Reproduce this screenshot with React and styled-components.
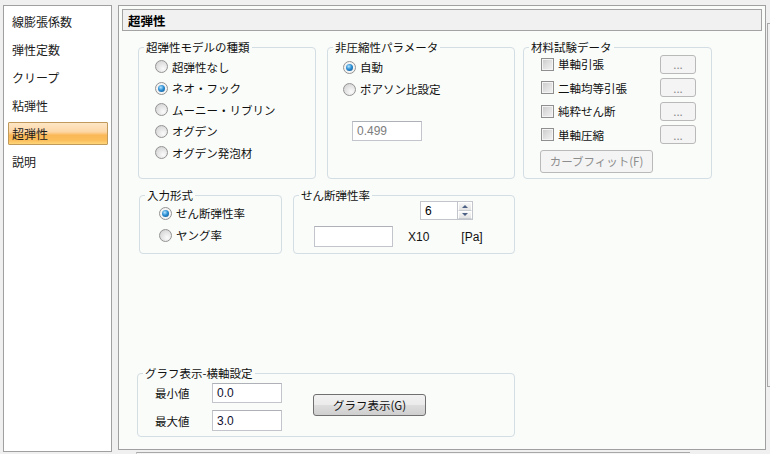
import React from 'react';
import styled, { createGlobalStyle, css } from 'styled-components';

const GlobalStyle = createGlobalStyle`
  html, body {
    margin: 0;
    padding: 0;
    background: #f0f0f0;
  }
  body {
    font-family: "Liberation Sans", "Noto Sans CJK JP", sans-serif;
    font-size: 12px;
    color: #000;
  }
`;

const Window = styled.div`
  width: 770px;
  height: 454px;
  box-sizing: border-box;
  display: flex;
  align-items: flex-start;
  gap: 6px;
  padding: 5px 0 0 3px;
  overflow: hidden;
`;

const Sidebar = styled.div`
  width: 109px;
  height: 447px;
  box-sizing: border-box;
  background: #fff;
  border: 1px solid #a0a0a0;
  padding: 4px 3px 0 4px;
  display: flex;
  flex-direction: column;
  gap: 5px;
  flex: none;
`;

const NavItem = styled.div`
  height: 23px;
  box-sizing: border-box;
  border: 1px solid transparent;
  border-radius: 1px;
  padding: 0 3px;
  display: flex;
  align-items: center;
  font-family: "Noto Sans CJK JP", sans-serif;
  font-size: 12px;
  line-height: 14px;
  color: #1a1a1a;
  ${p => p.$active && css`
    border-color: #c09a5a;
    background: linear-gradient(#fee6c6 0%, #fdd7a6 42%, #fbb857 58%, #fbbd5b 82%, #fdd67a 100%);
  `}
`;

const MainColumn = styled.div`
  display: flex;
  flex-direction: column;
  flex: none;
`;

const MainPanel = styled.div`
  width: 648px;
  height: 445px;
  box-sizing: border-box;
  background: #fafcf9;
  border: 1px solid #a0a0a0;
  padding: 3px;
  display: flex;
  flex-direction: column;
  flex: none;
`;

const BottomStrip = styled.div`
  margin: 2px 0 0 18px;
  width: 553px;
  height: 4px;
  border-top: 1px solid #a8a8a8;
  border-left: 1px solid #c8c8c8;
  background: #f4f4f4;
`;

const RightEdge = styled.div`
  margin: 18px 0 0 -5px;
  width: 3px;
  height: 364px;
  box-sizing: border-box;
  border: 1px solid #a8a8a8;
  border-right: none;
  flex: none;
`;

const Header = styled.div`
  height: 22px;
  box-sizing: border-box;
  background: #f1f1f1;
  border: 1px solid #a3a3a3;
  padding: 0 5px;
  display: flex;
  align-items: center;
  font-family: "Noto Sans CJK JP", sans-serif;
  font-weight: 700;
  font-size: 12.5px;
  flex: none;
`;

const Body = styled.div`
  flex: 1;
  display: flex;
  flex-direction: column;
  padding: 9px 0 9px 16px;
`;

const Row = styled.div`
  display: flex;
  align-items: stretch;
  height: ${p => p.$h}px;
  margin-top: ${p => p.$mt || 0}px;
  margin-left: ${p => p.$ml || 0}px;
  ${p => p.$bottom && css`margin-top: auto;`}
`;

const Group = styled.fieldset`
  margin: 0 0 0 ${p => p.$gap || 0}px;
  min-width: 0;
  width: ${p => p.$w}px;
  box-sizing: border-box;
  border: 1px solid #d3dde4;
  border-radius: 4px;
  padding: 0;
`;

const Legend = styled.legend`
  margin-left: 5px;
  padding: 0 2px;
  font-family: "Noto Sans CJK JP", sans-serif;
  font-size: 11.5px;
  line-height: 14px;
  color: #111;
`;

const GroupBody = styled.div`
  display: flex;
  flex-direction: column;
  align-items: flex-start;
  padding: ${p => p.$pad || '0 0 0 16px'};
`;

const OptionRow = styled.label`
  display: flex;
  align-items: center;
  gap: 4px;
  height: ${p => p.$h || 21.5}px;
  font-family: "Noto Sans CJK JP", sans-serif;
  font-size: 11.5px;
  line-height: 14px;
  color: #111;
`;

const RadioDot = styled.span`
  position: relative;
  width: 13px;
  height: 13px;
  box-sizing: border-box;
  border-radius: 50%;
  border: 1px solid #939393;
  background: radial-gradient(circle at 65% 70%, #fbfbfb 0%, #e6e6e6 45%, #cdcdcd 100%);
  flex: none;
  ${p => p.$checked && css`
    background: #f4f4f4;
    &::after {
      content: '';
      position: absolute;
      left: 2px;
      top: 2px;
      width: 7px;
      height: 7px;
      border-radius: 50%;
      background: radial-gradient(circle at 40% 35%, #b8e6ff 0%, #2c8fd4 45%, #0d4d86 100%);
    }
  `}
`;

const CheckBox = styled.span`
  width: 13px;
  height: 13px;
  box-sizing: border-box;
  border: 1px solid #8f8f8f;
  box-shadow: inset 0 0 0 1px #f4f4f4;
  background: linear-gradient(135deg, #c9c9c9 0%, #e0e0e0 50%, #f3f3f3 100%);
  flex: none;
`;

const TextBox = styled.div`
  width: ${p => p.$w || 70}px;
  height: ${p => p.$h || 20}px;
  box-sizing: border-box;
  border: 1px solid #c2c6cc;
  border-top-color: #aeb2b8;
  background: #fff;
  padding: 0 4px;
  display: flex;
  align-items: center;
  font-size: 12px;
  color: ${p => (p.$disabled ? '#7d7d7d' : '#101030')};
  flex: none;
`;

const Button = styled.div`
  width: ${p => p.$w}px;
  height: ${p => p.$h}px;
  box-sizing: border-box;
  border-radius: 3px;
  display: flex;
  align-items: center;
  justify-content: center;
  font-family: "Noto Sans CJK JP", sans-serif;
  font-size: 11.5px;
  line-height: 14px;
  flex: none;
  ${p => p.$disabled ? css`
    border: 1px solid #b9b9b9;
    background: #f4f4f4;
    color: #8d8d8d;
  ` : css`
    border: 1px solid #707070;
    background: linear-gradient(#f2f2f2 0%, #ebebeb 48%, #dddddd 52%, #cfcfcf 100%);
    color: #111;
  `}
`;

const CheckList = styled.div`
  align-self: stretch;
  display: flex;
  flex-direction: column;
  gap: 3.5px;
`;

const CheckRow = styled.div`
  display: flex;
  align-items: center;
  justify-content: space-between;
  height: 20px;
  padding-right: 15px;
`;

const Spinner = styled.div`
  display: flex;
  margin: -1px 0 0 126px;
  height: 19px;
`;

const SpinField = styled.div`
  width: 37px;
  box-sizing: border-box;
  border: 1px solid #c2c6cc;
  border-right: none;
  background: #fff;
  padding-left: 4px;
  display: flex;
  align-items: center;
  font-size: 12px;
`;

const SpinButtons = styled.div`
  width: 16px;
  display: flex;
  flex-direction: column;
  border: 1px solid #c2c6cc;
  box-sizing: border-box;
`;

const SpinButton = styled.div`
  flex: 1;
  display: flex;
  align-items: center;
  justify-content: center;
  background: linear-gradient(#f7f7f7, #e3e3e3);
  border: 1px solid #fff;
  border-bottom-color: #c9cdd2;
  box-sizing: border-box;
  &::before {
    content: '';
    border-left: 3px solid transparent;
    border-right: 3px solid transparent;
    ${p => p.$down
      ? css`border-top: 3px solid #4d6185;`
      : css`border-bottom: 3px solid #4d6185;`}
  }
`;

const ValueRow = styled.div`
  display: flex;
  align-items: center;
  margin: 6px 0 0 20px;
  font-size: 12px;
`;

const Unit = styled.span`
  margin-left: ${p => p.$ml}px;
  color: #111;
`;

const AxisContent = styled.div`
  display: flex;
  align-items: flex-start;
`;

const AxisGrid = styled.div`
  display: grid;
  grid-template-columns: 57px 70px;
  row-gap: 7px;
  align-items: center;
  padding-top: 3px;
`;

const AxisLabel = styled.span`
  font-family: "Noto Sans CJK JP", sans-serif;
  font-size: 11.5px;
  color: #111;
`;

const Radio = ({ checked, label, h }) => (
  <OptionRow $h={h}>
    <RadioDot $checked={checked} />
    {label}
  </OptionRow>
);

const navItems = ['線膨張係数', '弾性定数', 'クリープ', '粘弾性', '超弾性', '説明'];
const models = ['超弾性なし', 'ネオ・フック', 'ムーニー・リブリン', 'オグデン', 'オグデン発泡材'];
const tests = ['単軸引張', '二軸均等引張', '純粋せん断', '単軸圧縮'];

export default function App() {
  return (
    <>
      <GlobalStyle />
      <Window>
        <Sidebar>
          {navItems.map(n => (
            <NavItem key={n} $active={n === '超弾性'}>{n}</NavItem>
          ))}
        </Sidebar>
        <MainColumn>
          <MainPanel>
            <Header>超弾性</Header>
            <Body>
              <Row $h={139}>
                <Group $w={178}>
                  <Legend>超弾性モデルの種類</Legend>
                  <GroupBody $pad="2px 0 0 16px">
                    {models.map((m, i) => (
                      <Radio key={m} label={m} checked={i === 1} />
                    ))}
                  </GroupBody>
                </Group>
                <Group $w={188} $gap={11}>
                  <Legend>非圧縮性パラメータ</Legend>
                  <GroupBody $pad="2px 0 0 15px">
                    <Radio label="自動" checked h={22} />
                    <Radio label="ポアソン比設定" h={22} />
                    <TextBox $disabled style={{ margin: '21px 0 0 9px' }}>0.499</TextBox>
                  </GroupBody>
                </Group>
                <Group $w={189} $gap={8}>
                  <Legend>材料試験データ</Legend>
                  <GroupBody $pad="0 0 0 17px">
                    <CheckList>
                      {tests.map(t => (
                        <CheckRow key={t}>
                          <OptionRow $h={20}>
                            <CheckBox />
                            {t}
                          </OptionRow>
                          <Button $disabled $w={36} $h={19}>...</Button>
                        </CheckRow>
                      ))}
                    </CheckList>
                    <Button $disabled $w={113} $h={23} style={{ margin: '5px 0 0 -1px' }}>
                      カーブフィット(F)
                    </Button>
                  </GroupBody>
                </Group>
              </Row>
              <Row $h={66} $mt={9} $ml={1}>
                <Group $w={143}>
                  <Legend>入力形式</Legend>
                  <GroupBody $pad="0 0 0 19px">
                    <Radio label="せん断弾性率" checked h={22} />
                    <Radio label="ヤング率" h={22} />
                  </GroupBody>
                </Group>
                <Group $w={222} $gap={11}>
                  <Legend>せん断弾性率</Legend>
                  <GroupBody $pad="0">
                    <Spinner>
                      <SpinField>6</SpinField>
                      <SpinButtons>
                        <SpinButton />
                        <SpinButton $down />
                      </SpinButtons>
                    </Spinner>
                    <ValueRow>
                      <TextBox $w={79} $h={21} />
                      <Unit $ml={15}>X10</Unit>
                      <Unit $ml={32}>[Pa]</Unit>
                    </ValueRow>
                  </GroupBody>
                </Group>
              </Row>
              <Row $h={71} $bottom $ml={-1}>
                <Group $w={378}>
                  <Legend>グラフ表示-横軸設定</Legend>
                  <GroupBody $pad="0 0 0 17px">
                    <AxisContent>
                      <AxisGrid>
                        <AxisLabel>最小値</AxisLabel>
                        <TextBox>0.0</TextBox>
                        <AxisLabel>最大値</AxisLabel>
                        <TextBox $h={21}>3.0</TextBox>
                      </AxisGrid>
                      <Button $w={113} $h={22} style={{ margin: '14px 0 0 31px' }}>
                        グラフ表示(G)
                      </Button>
                    </AxisContent>
                  </GroupBody>
                </Group>
              </Row>
            </Body>
          </MainPanel>
          <BottomStrip />
        </MainColumn>
        <RightEdge />
      </Window>
    </>
  );
}
